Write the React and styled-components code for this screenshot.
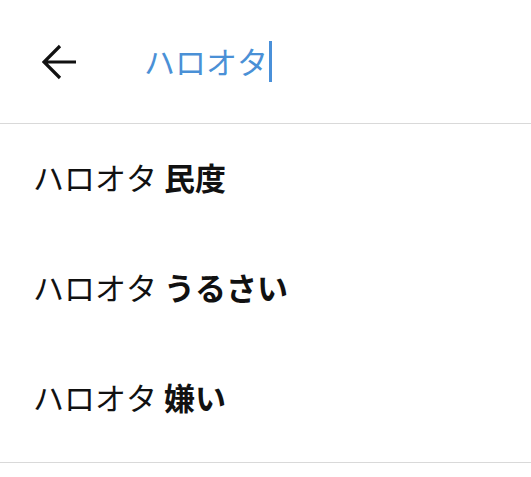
import React from "react";
import styled, { createGlobalStyle } from "styled-components";

const Global = createGlobalStyle`
  html, body { margin: 0; padding: 0; background: #fff; }
  body { font-family: "Noto Sans CJK JP", "Noto Sans", sans-serif; }
`;

const Page = styled.div`
  width: 531px;
  height: 477px;
  background: #fff;
  display: flex;
  flex-direction: column;
  overflow: hidden;
`;

const Header = styled.div`
  flex: none;
  display: flex;
  align-items: center;
  border-bottom: 1px solid #d9d9d9;
  box-sizing: border-box;
  height: 124px;
`;

const BackButton = styled.button`
  width: 36px;
  height: 36px;
  margin-left: 42px;
  padding: 0;
  border: none;
  background: none;
  display: flex;
  align-items: center;
  justify-content: center;
  color: #111;
`;

const Query = styled.div`
  margin-left: 66px;
  display: flex;
  align-items: center;
  font-size: 31px;
  color: #4a90d6;
  line-height: 1;
  padding-bottom: 2px;
`;

const Caret = styled.span`
  display: inline-block;
  width: 3px;
  height: 41px;
  background: #4a90d9;
  margin-left: 1px;
  margin-bottom: -2px;
`;

const List = styled.div`
  display: flex;
  flex-direction: column;
  padding-bottom: 8px;
  border-bottom: 1px solid #d9d9d9;
`;

const Row = styled.div`
  height: 110px;
  box-sizing: border-box;
  display: flex;
  align-items: center;
  padding-left: 33px;
  padding-bottom: 5px;
  font-size: 31px;
  line-height: 1;
  color: #111;
  white-space: pre;
`;

const Strong = styled.span`
  font-weight: 700;
`;

const suggestions = ["民度", "うるさい", "嫌い"];

export default function App() {
  return (
    <Page>
      <Global />
      <Header>
        <BackButton aria-label="戻る">
          <svg width="36" height="36" viewBox="0 0 36 36" fill="none">
            <path
              d="M34 18H3M18 2L2 18l16 16"
              stroke="#111"
              strokeWidth="3.2"
              strokeLinecap="butt"
              strokeLinejoin="miter"
            />
          </svg>
        </BackButton>
        <Query>
          ハロオタ
          <Caret />
        </Query>
      </Header>
      <List>
        {suggestions.map((s) => (
          <Row key={s}>
            ハロオタ <Strong>{s}</Strong>
          </Row>
        ))}
      </List>
    </Page>
  );
}
